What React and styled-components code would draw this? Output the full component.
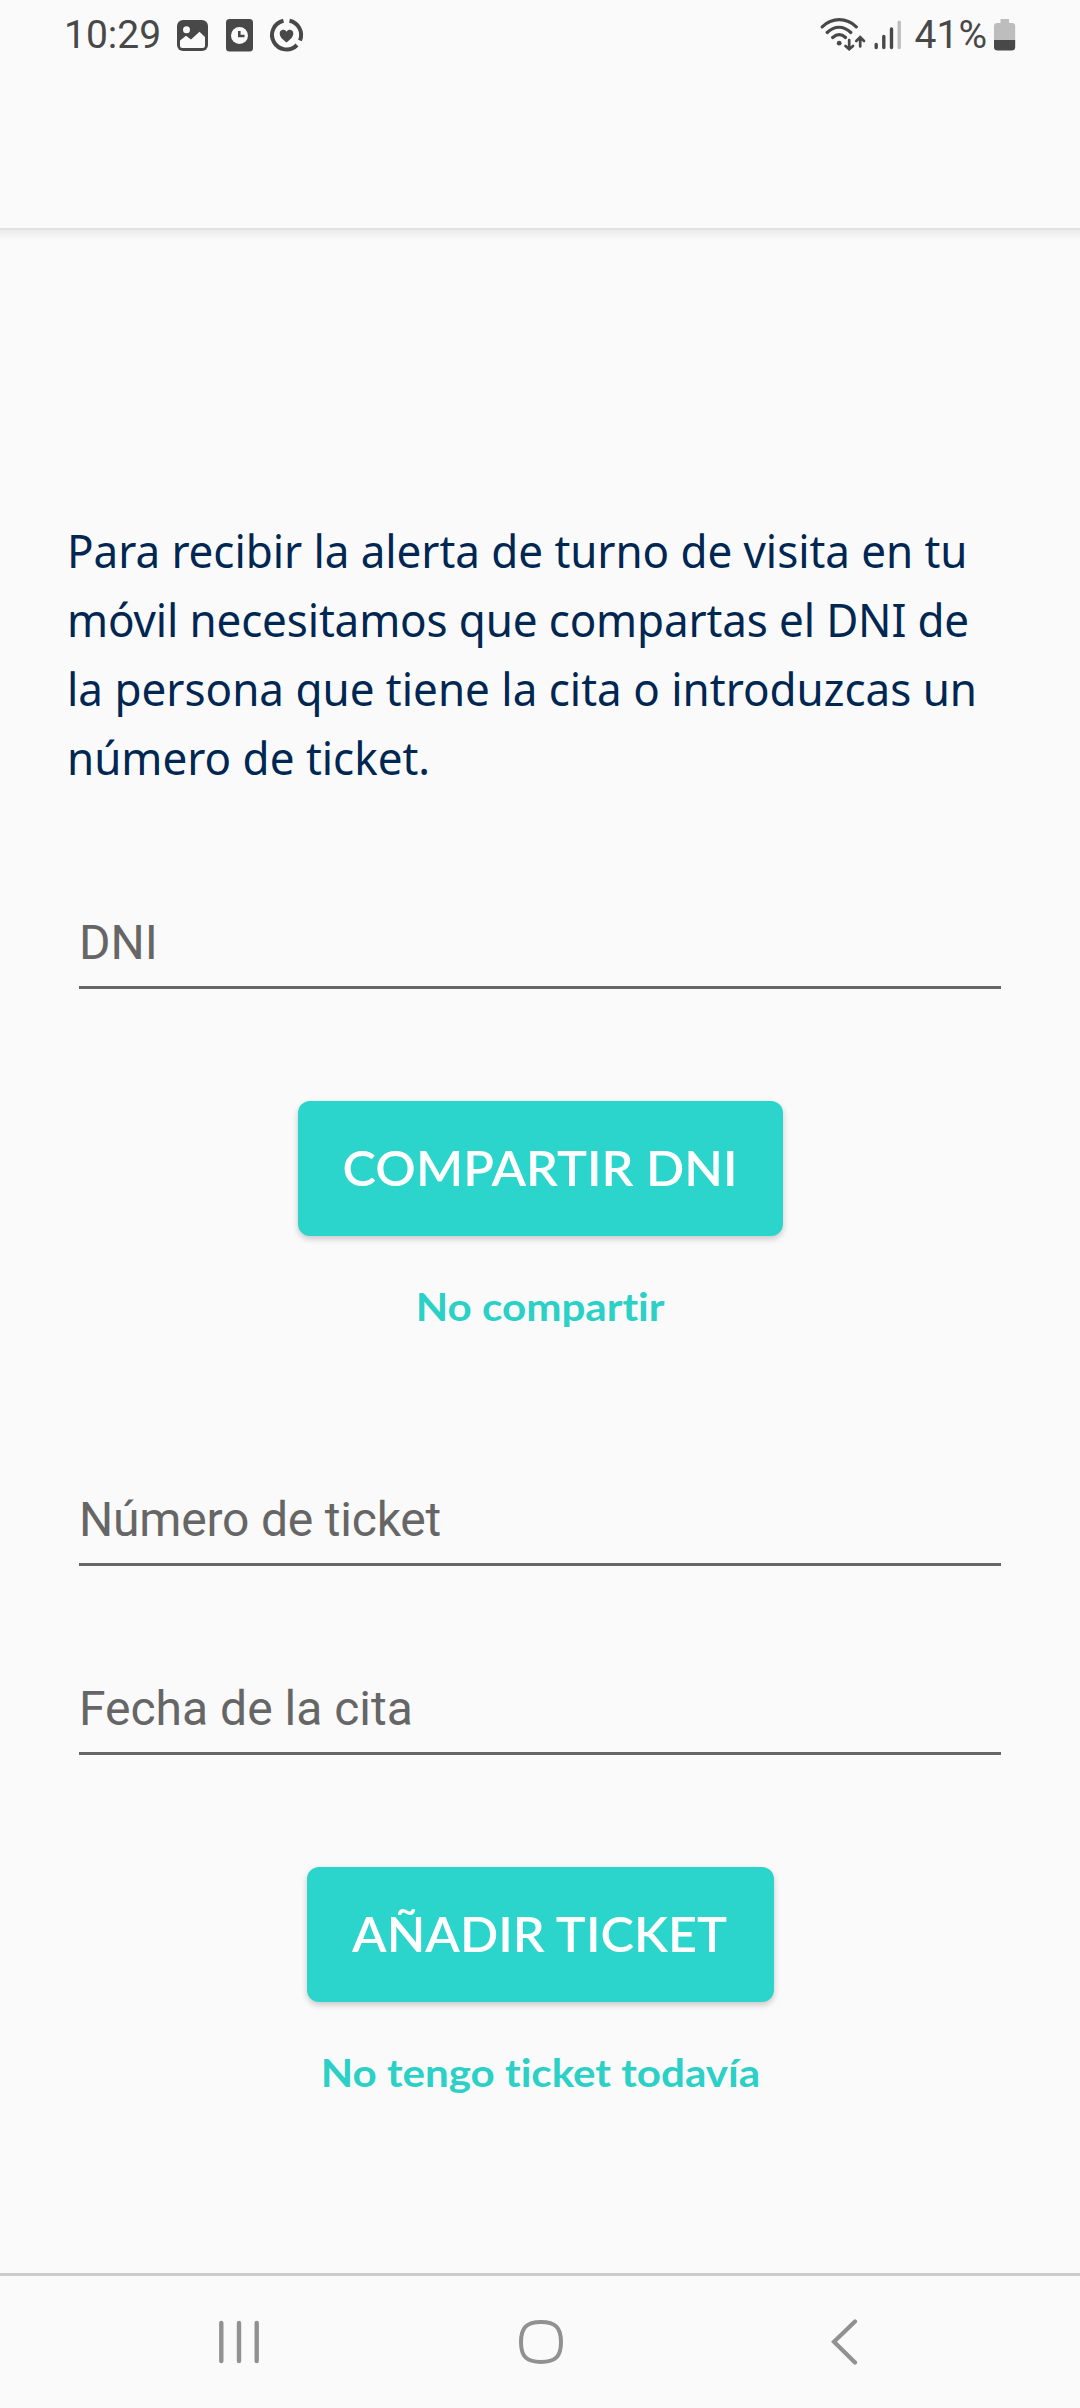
import React from 'react';
import styled, { createGlobalStyle } from 'styled-components';

const App = () => {
  return (
    <Screen>
      <GlobalStyle />
      <Header>
        <StatusBar>
          <Clock>10:29</Clock>
          <Notifications>
            <GalleryIcon />
            <AlarmIcon />
            <HealthIcon />
          </Notifications>
          <SystemIcons>
            <WifiIcon />
            <SignalIcon />
          </SystemIcons>
          <Battery>41%</Battery>
          <BatteryIcon />
        </StatusBar>
      </Header>

      <Main>
        <Intro>
          <Line $spacing="-0.06px">Para recibir la alerta de turno de visita en tu</Line>{' '}
          <Line $spacing="-0.15px">móvil necesitamos que compartas el DNI de</Line>{' '}
          <Line>la persona que tiene la cita o introduzcas un</Line>{' '}
          <Line>número de ticket.</Line>
        </Intro>

        <Form $top="116px">
          <Field>DNI</Field>
          <Button $width="485px">
            <Label>COMPARTIR DNI</Label>
          </Button>
          <TextLink>No compartir</TextLink>
        </Form>

        <Form $top="154px">
          <Field $spacing="-0.2px">Número de ticket</Field>
          <Field $top="108px">Fecha de la cita</Field>
          <Button $width="467px">
            <Label>AÑADIR TICKET</Label>
          </Button>
          <TextLink>No tengo ticket todavía</TextLink>
        </Form>
      </Main>

      <NavBar>
        <NavButton aria-label="Recientes">
          <svg width="44" height="46" viewBox="0 0 44 46" fill="none" stroke="#919191" strokeWidth="4.4" strokeLinecap="round">
            <path d="M4.3 4V42M22 4V42M39.7 4V42" />
          </svg>
        </NavButton>
        <HomeButton aria-label="Inicio">
          <svg width="46" height="46" viewBox="0 0 46 46" fill="none" stroke="#919191" strokeWidth="4">
            <path d="M23 3C37.5 3 43 8.5 43 23S37.5 43 23 43S3 37.5 3 23S8.5 3 23 3Z" />
          </svg>
        </HomeButton>
        <NavButton aria-label="Atrás">
          <svg width="30" height="46" viewBox="0 0 30 46" fill="none" stroke="#919191" strokeWidth="4.2" strokeLinecap="round">
            <path d="M25 2.5L4 22.7L25 43.5" />
          </svg>
        </NavButton>
      </NavBar>
    </Screen>
  );
};

export default App;

const GalleryIcon = () => (
  <svg width="31" height="31" viewBox="0 0 31 31">
    <rect width="31" height="31" rx="6" fill="#484848" />
    <circle cx="9.5" cy="9.7" r="3.5" fill="#fafafa" />
    <path d="M3 20.5L9 15.8L14 19.5L22.5 11.8L28 17V25.5Q28 28 25.5 28H5.5Q3 28 3 25.5Z" fill="#fafafa" />
  </svg>
);

const AlarmIcon = () => (
  <svg width="27" height="33" viewBox="0 0 27 33">
    <rect width="27" height="32.5" rx="3.5" fill="#484848" />
    <circle cx="13.5" cy="16.5" r="8.5" fill="#fafafa" />
    <path d="M13.3 12V17H18.5" fill="none" stroke="#484848" strokeWidth="2.6" />
  </svg>
);

const HealthIcon = () => (
  <svg width="31" height="34" viewBox="1.5 0 31 34" overflow="visible">
    <g fill="none" stroke="#484848" strokeWidth="4">
      <path d="M14 2.8A14.5 14.5 0 1 0 27.5 27" />
      <path d="M20 2.8A14.5 14.5 0 0 1 30.5 22.5" />
    </g>
    <path d="M17 24.5C12.5 21 10.2 18.7 10.2 15.5C10.2 11.5 15 10.5 17 13.8C19 10.5 23.8 11.5 23.8 15.5C23.8 18.7 21.5 21 17 24.5Z" fill="#484848" />
  </svg>
);

const WifiIcon = () => (
  <svg width="46" height="34" viewBox="0 0 46 34" fill="none" stroke="#484848" strokeLinecap="round">
    <path d="M2.2 8.8C12 -0.7 26.5 -0.7 36.3 8.8M7.2 14.5C14.5 7.5 23.5 7.5 30.8 14.5M12.7 19.5C17 15.7 21.5 15.7 25.5 19.5" strokeWidth="3.2" />
    <circle cx="19.2" cy="25.2" r="2.4" fill="#484848" stroke="none" />
    <path d="M29.2 22V30.5M25.5 28L29.2 31.3L33 28M40.2 28.5V20.5M36.3 23L40.2 19.2L44 23" strokeWidth="2.7" />
  </svg>
);

const SignalIcon = () => (
  <svg width="28" height="32" viewBox="0 0 28 32" fill="none" stroke="#484848" strokeWidth="3.4" strokeLinecap="round">
    <path d="M2.2 25.5V28.5M9.8 17.5V28.5M17.5 10V28.5" />
    <path d="M25.2 3.2V28.5" stroke="#bdbdbd" />
  </svg>
);

const BatteryIcon = () => (
  <svg width="22" height="32" viewBox="0 0 22 32">
    <path d="M6.5 0H15V4H18Q21.2 4 21.2 7V21H0V7Q0 4 3.2 4H6.5Z" fill="#bdbdbd" />
    <path d="M0 21H21.2V28Q21.2 31.5 17.7 31.5H3.5Q0 31.5 0 28Z" fill="#484848" />
  </svg>
);

const GlobalStyle = createGlobalStyle`
  * {
    box-sizing: border-box;
  }

  body {
    margin: 0;
    background-color: #fafafa;
  }

  svg {
    display: block;
    flex-shrink: 0;
  }
`;

const Screen = styled.div`
  display: flex;
  flex-direction: column;
  width: 1080px;
  height: 2408px;
  background-color: #fafafa;
  overflow: hidden;
`;

const Header = styled.header`
  height: 230px;
  flex-shrink: 0;
  border-bottom: 2px solid #e1e1e1;
`;

const StatusBar = styled.div`
  display: flex;
  align-items: center;
  height: 70px;
  padding: 0 64px;
  font-family: Roboto, sans-serif;
  font-size: 39px;
  line-height: 70px;
  color: #484848;
`;

const Clock = styled.span`
  width: 113px;
`;

const Notifications = styled.div`
  display: flex;
  align-items: center;
  gap: 18px;
`;

const SystemIcons = styled.div`
  display: flex;
  align-items: center;
  gap: 8px;
  margin-left: auto;
`;

const Battery = styled.span`
  margin: 0 7px 0 13px;
`;

/* The gradient is the shadow that the header casts on the content */
const Main = styled.main`
  display: flex;
  flex-direction: column;
  flex: 1;
  padding: 286px 67px 0;
  background: linear-gradient(#ebebeb, #fafafa) top / 100% 11px no-repeat;
`;

const Intro = styled.p`
  margin: 0;
  font-family: 'Noto Sans', sans-serif;
  font-size: 46px;
  line-height: 69px;
  color: #002652;
  transform: scaleX(0.956);
  transform-origin: left;
`;

const Line = styled.span`
  display: block;
  white-space: nowrap;
  letter-spacing: ${({ $spacing }) => $spacing || 'normal'};
`;

const Form = styled.section`
  display: flex;
  flex-direction: column;
  align-items: center;
  margin-top: ${({ $top }) => $top};
`;

const Field = styled.label`
  width: 922px;
  height: 81px;
  margin-top: ${({ $top }) => $top || '0'};
  border-bottom: 3px solid #666666;
  font-family: Roboto, sans-serif;
  font-size: 48px;
  line-height: 69px;
  letter-spacing: ${({ $spacing }) => $spacing || 'normal'};
  color: #666666;
`;

const Button = styled.button`
  width: ${({ $width }) => $width};
  height: 135px;
  margin-top: 112px;
  padding: 0 0 3px;
  border: none;
  border-radius: 12px;
  background-color: #2bd5cb;
  box-shadow: 0 3px 6px rgba(0, 0, 0, 0.2);
  font-family: Lato, sans-serif;
  font-size: 48px;
  font-weight: 600;
  color: #ffffff;
  cursor: pointer;
`;

const Label = styled.span`
  display: inline-block;
  transform: scaleX(1.05);
`;

const TextLink = styled.a`
  margin-top: 45px;
  font-family: Lato, sans-serif;
  font-size: 39px;
  font-weight: 700;
  font-variant-ligatures: none;
  line-height: 50px;
  color: #2bd0c6;
  transform: scaleX(1.08);
`;

const NavBar = styled.nav`
  display: flex;
  align-items: center;
  justify-content: space-between;
  height: 135px;
  padding: 0 220px 0 217px;
  border-top: 3px solid #cccccc;
`;

const NavButton = styled.button`
  padding: 0;
  border: none;
  background: none;
`;

const HomeButton = styled(NavButton)`
  margin-right: 9px;
`;
